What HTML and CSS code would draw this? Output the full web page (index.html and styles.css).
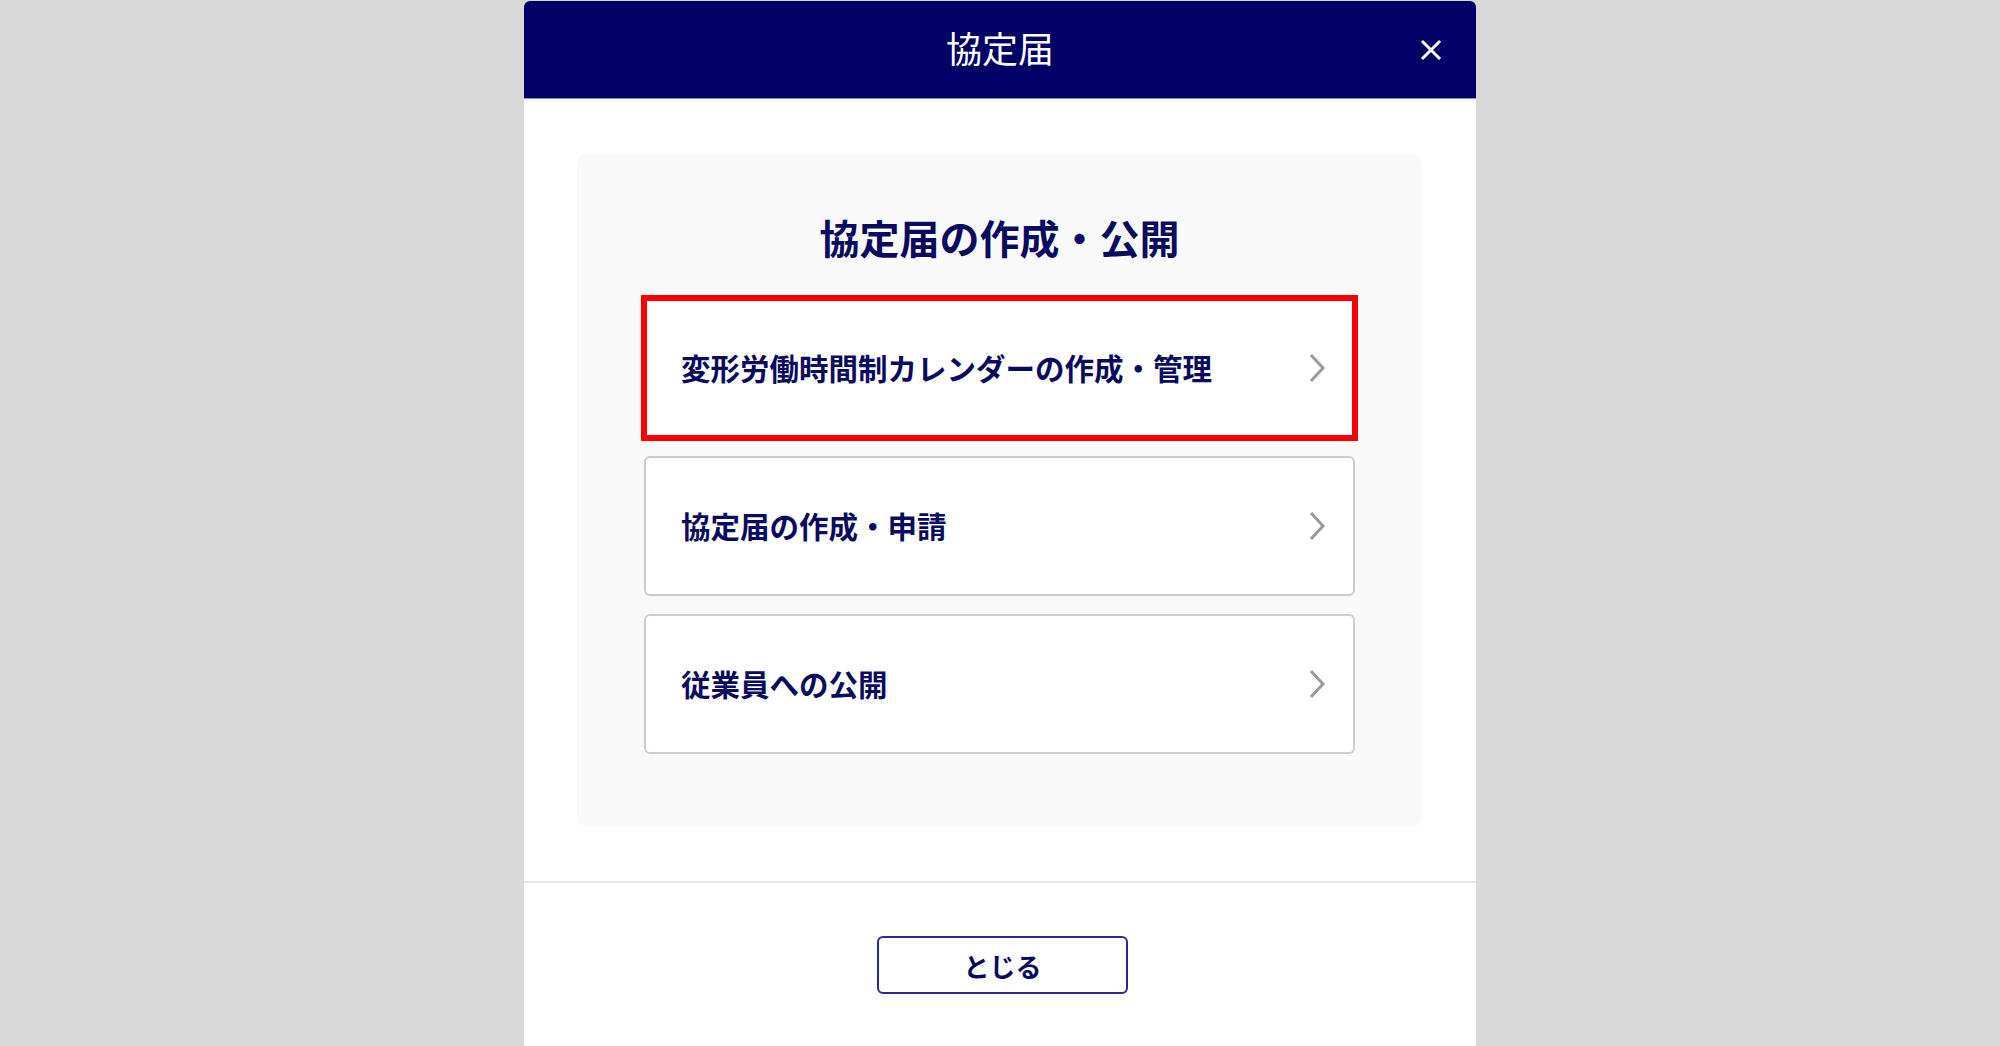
FILE: index.html
```html
<!DOCTYPE html>
<html lang="ja">
<head>
<meta charset="utf-8">
<title>協定届</title>
<link rel="stylesheet" href="styles.css">
</head>
<body>
<div class="modal">
  <header class="modal-header">
    <span></span>
    <h1 class="modal-title">協定届</h1>
    <button class="close-btn" aria-label="close">
      <svg width="22" height="22" viewBox="0 0 22 22"><path d="M3 3 L19 19 M19 3 L3 19" stroke="#fff" stroke-width="3" stroke-linecap="square" fill="none"/></svg>
    </button>
  </header>
  <main class="modal-body">
    <section class="panel">
      <h2 class="panel-title">協定届の作成・公開</h2>
      <div class="card-list">
        <a class="card card-highlight">
          <span class="card-label">変形労働時間制カレンダーの作成・管理</span>
          <svg class="chevron" width="18" height="32" viewBox="0 0 18 32"><polyline points="3,3 15,16 3,29" stroke="#9a9a9a" stroke-width="3" fill="none"/></svg>
        </a>
        <a class="card">
          <span class="card-label">協定届の作成・申請</span>
          <svg class="chevron" width="18" height="32" viewBox="0 0 18 32"><polyline points="3,3 15,16 3,29" stroke="#9a9a9a" stroke-width="3" fill="none"/></svg>
        </a>
        <a class="card">
          <span class="card-label">従業員への公開</span>
          <svg class="chevron" width="18" height="32" viewBox="0 0 18 32"><polyline points="3,3 15,16 3,29" stroke="#9a9a9a" stroke-width="3" fill="none"/></svg>
        </a>
      </div>
    </section>
  </main>
  <footer class="modal-footer">
    <button class="close-text-btn">とじる</button>
  </footer>
</div>
</body>
</html>
```
FILE: styles.css
```css
html, body {
  margin: 0;
  padding: 0;
}
body {
  background: #d9d9d9;
  height: 1046px;
  overflow: hidden;
  font-family: "Noto Sans CJK JP", "Noto Sans", sans-serif;
}
.modal {
  width: 952px;
  margin: 1px auto 0;
  background: #fff;
  border-radius: 6px 6px 0 0;
  overflow: hidden;
  height: 1045px;
}
.modal-header {
  height: 97px;
  background: #000066;
  border-bottom: 1px solid #8a8ad0;
  display: grid;
  grid-template-columns: 1fr auto 1fr;
  align-items: center;
}
.modal-title {
  margin: 0 0 5px;
  color: #fff;
  font-size: 36px;
  font-weight: 400;
  line-height: 1;
}
.close-btn {
  justify-self: end;
  margin-right: 34px;
  background: none;
  border: 0;
  padding: 0;
  display: flex;
  cursor: pointer;
}
.modal-body {
  padding: 55px 54px 54px 53px;
}
.panel {
  background: #f9f9f9;
  border-radius: 10px;
  padding: 59px 0 73px;
  display: flex;
  flex-direction: column;
  align-items: center;
}
.panel-title {
  margin: 0 0 37px;
  font-size: 40px;
  line-height: 48px;
  font-weight: 700;
  color: #0a0a5e;
}
.card-list {
  display: flex;
  flex-direction: column;
  gap: 18px;
  width: 711px;
}
.card {
  box-sizing: border-box;
  height: 140px;
  background: #fff;
  border: 2px solid #cccccc;
  border-radius: 6px;
  display: flex;
  align-items: center;
  justify-content: space-between;
  padding: 0 27px 0 35px;
  cursor: pointer;
}
.card-highlight {
  outline: 6px solid #ff0000;
  outline-offset: -3px;
  border-radius: 0;
}
.card-label {
  font-size: 29.5px;
  font-weight: 700;
  color: #0a0a5e;
  line-height: 1;
}
.chevron {
  flex: none;
}
.modal-footer {
  border-top: 2px solid #e5e5e5;
  padding: 53px 0;
  display: flex;
  justify-content: center;
}
.close-text-btn {
  width: 251px;
  height: 58px;
  margin-left: 5px;
  background: #fff;
  border: 2px solid #2a2a8a;
  border-radius: 6px;
  font-family: "Noto Sans CJK JP", "Noto Sans", sans-serif;
  font-size: 26px;
  font-weight: 700;
  color: #0a0a5e;
  cursor: pointer;
}
```
